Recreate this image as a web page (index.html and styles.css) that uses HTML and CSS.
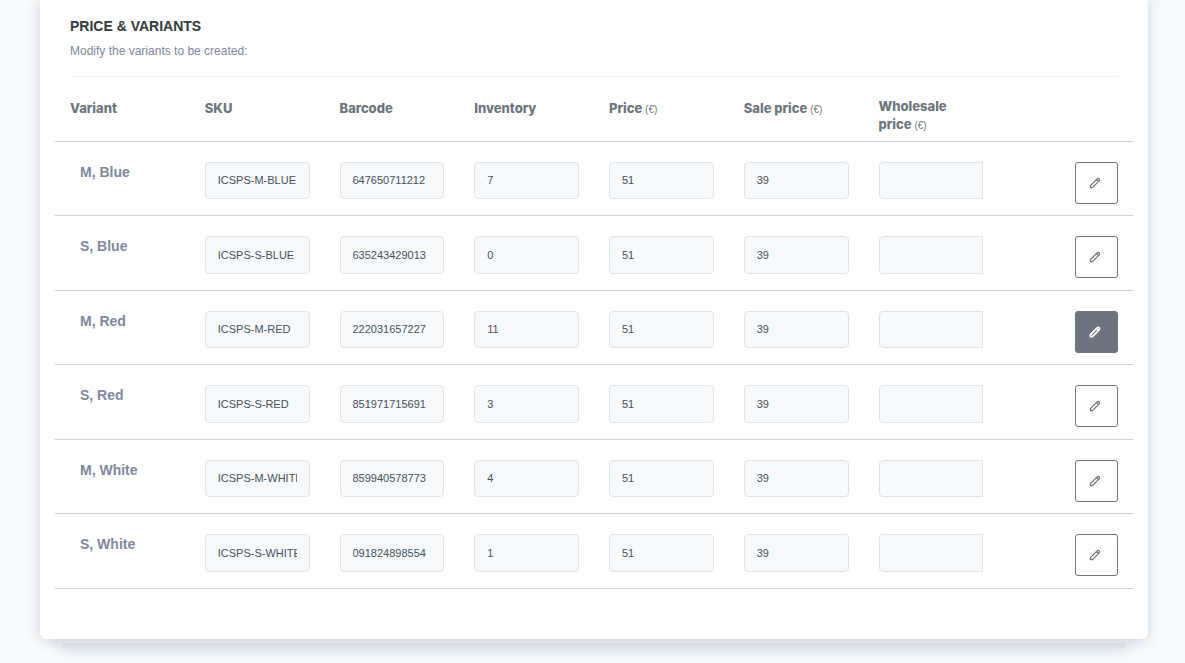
FILE: index.html
```
<!DOCTYPE html>
<html lang="en">
<head>
<meta charset="utf-8">
<title>Price &amp; Variants</title>
<link rel="stylesheet" href="styles.css">
</head>
<body>
<svg class="sprite" aria-hidden="true">
  <symbol id="pencil" viewBox="0 0 12 12">
    <path d="M1.4 10.6V8.6L7.9 2.1Q9 1 10.3 1.7Q11 3 9.9 4.1L3.4 10.6Z M7.5 2.6 9.4 4.5"/>
  </symbol>
</svg>
<main class="card">
  <header class="card-header">
    <h1 class="card-title">PRICE &amp; VARIANTS</h1>
    <p class="card-subtitle">Modify the variants to be created:</p>
  </header>
  <table class="variants">
    <thead>
      <tr>
        <th scope="col">Variant</th>
        <th scope="col">SKU</th>
        <th scope="col">Barcode</th>
        <th scope="col">Inventory</th>
        <th scope="col">Price <small>(€)</small></th>
        <th scope="col">Sale price <small>(€)</small></th>
        <th scope="col" class="two-line">Wholesale price <small>(€)</small></th>
        <td></td>
      </tr>
    </thead>
    <tbody>
      <tr>
        <th scope="row">M, Blue</th>
        <td><input class="field" aria-label="SKU" value="ICSPS-M-BLUE"></td>
        <td><input class="field" aria-label="Barcode" value="647650711212"></td>
        <td><input class="field" aria-label="Inventory" value="7"></td>
        <td><input class="field" aria-label="Price" value="51"></td>
        <td><input class="field" aria-label="Sale price" value="39"></td>
        <td><input class="field field-flat" aria-label="Wholesale price"></td>
        <td><button class="edit" type="button" aria-label="Edit M, Blue"><svg class="icon"><use href="#pencil"/></svg></button></td>
      </tr>
      <tr>
        <th scope="row">S, Blue</th>
        <td><input class="field" aria-label="SKU" value="ICSPS-S-BLUE"></td>
        <td><input class="field" aria-label="Barcode" value="635243429013"></td>
        <td><input class="field" aria-label="Inventory" value="0"></td>
        <td><input class="field" aria-label="Price" value="51"></td>
        <td><input class="field" aria-label="Sale price" value="39"></td>
        <td><input class="field field-flat" aria-label="Wholesale price"></td>
        <td><button class="edit" type="button" aria-label="Edit S, Blue"><svg class="icon"><use href="#pencil"/></svg></button></td>
      </tr>
      <tr>
        <th scope="row">M, Red</th>
        <td><input class="field" aria-label="SKU" value="ICSPS-M-RED"></td>
        <td><input class="field" aria-label="Barcode" value="222031657227"></td>
        <td><input class="field" aria-label="Inventory" value="11"></td>
        <td><input class="field" aria-label="Price" value="51"></td>
        <td><input class="field" aria-label="Sale price" value="39"></td>
        <td><input class="field field-flat" aria-label="Wholesale price"></td>
        <td><button class="edit edit-active" type="button" aria-label="Edit M, Red"><svg class="icon"><use href="#pencil"/></svg></button></td>
      </tr>
      <tr>
        <th scope="row">S, Red</th>
        <td><input class="field" aria-label="SKU" value="ICSPS-S-RED"></td>
        <td><input class="field" aria-label="Barcode" value="851971715691"></td>
        <td><input class="field" aria-label="Inventory" value="3"></td>
        <td><input class="field" aria-label="Price" value="51"></td>
        <td><input class="field" aria-label="Sale price" value="39"></td>
        <td><input class="field field-flat" aria-label="Wholesale price"></td>
        <td><button class="edit" type="button" aria-label="Edit S, Red"><svg class="icon"><use href="#pencil"/></svg></button></td>
      </tr>
      <tr>
        <th scope="row">M, White</th>
        <td><input class="field" aria-label="SKU" value="ICSPS-M-WHITE"></td>
        <td><input class="field" aria-label="Barcode" value="859940578773"></td>
        <td><input class="field" aria-label="Inventory" value="4"></td>
        <td><input class="field" aria-label="Price" value="51"></td>
        <td><input class="field" aria-label="Sale price" value="39"></td>
        <td><input class="field field-flat" aria-label="Wholesale price"></td>
        <td><button class="edit" type="button" aria-label="Edit M, White"><svg class="icon"><use href="#pencil"/></svg></button></td>
      </tr>
      <tr>
        <th scope="row">S, White</th>
        <td><input class="field" aria-label="SKU" value="ICSPS-S-WHITE"></td>
        <td><input class="field" aria-label="Barcode" value="091824898554"></td>
        <td><input class="field" aria-label="Inventory" value="1"></td>
        <td><input class="field" aria-label="Price" value="51"></td>
        <td><input class="field" aria-label="Sale price" value="39"></td>
        <td><input class="field field-flat" aria-label="Wholesale price"></td>
        <td><button class="edit" type="button" aria-label="Edit S, White"><svg class="icon"><use href="#pencil"/></svg></button></td>
      </tr>
    </tbody>
  </table>
</main>
<div class="stack stack-near"></div>
<div class="stack stack-far"></div>
</body>
</html>
```
FILE: styles.css
```
* { box-sizing: border-box; }

body {
  margin: 0;
  padding: 0 37px 14px 40px;
  background: #f5fafd;
  font-family: "Liberation Sans", Arial, sans-serif;
  color: #6c757d;
}

.sprite { display: none; }

.card {
  position: relative;
  z-index: 2;
  padding: 16px 15px 50px;
  background: #fff;
  border-radius: 0 0 6px 6px;
  box-shadow: 0 1px 14px rgba(80, 95, 125, 0.22);
}

.card-header {
  margin: 0 15px;
  padding-bottom: 16px;
  border-bottom: 1px solid #eff1f4;
}

.card-title {
  margin: 0;
  font-size: 14px;
  line-height: 20px;
  color: #343a40;
}

.card-subtitle {
  margin: 6px 0 0;
  font-size: 12px;
  line-height: 18px;
  color: #8088a0;
}

.variants {
  width: 100%;
  table-layout: fixed;
  border-collapse: separate;
  border-spacing: 0;
}

.variants th,
.variants td {
  border-bottom: 1px solid #ced1d6;
  text-align: left;
  vertical-align: top;
}

.variants thead th {
  padding: 20px 15px 8px;
  font-family: "Arial Black", Inter, "Liberation Sans", sans-serif;
  font-size: 13px;
  font-weight: 800;
  line-height: 22px;
}

.variants thead .two-line {
  padding-right: 30px;
  line-height: 18px;
}

.variants small {
  font-family: "Liberation Sans", Arial, sans-serif;
  font-size: 10px;
  font-weight: 400;
  line-height: 1;
}

.variants tbody tr { height: 74px; }
.variants tbody tr:nth-child(even) { height: 75px; }

.variants tbody th,
.variants tbody td {
  padding: 20px 15px 0;
}

.variants tbody th {
  padding-left: 25px;
  font-size: 14px;
  line-height: 20px;
  color: #8088a0;
}

.field {
  display: block;
  width: 100%;
  height: 37px;
  padding: 0 12px 1px;
  border: 1px solid #e2e5e8;
  border-radius: 4px;
  background: #f6fafd;
  color: #495057;
  font: 11px "Liberation Sans", Arial, sans-serif;
}

.variants tr:nth-child(even) .field {
  height: 38px;
  padding-bottom: 0;
}

.field-flat { border-radius: 4px 0 0 4px; }

.edit {
  display: flex;
  align-items: center;
  width: 43px;
  height: 42px;
  margin-left: auto;
  padding: 0 12px 1px 13px;
  border: 1px solid #6c757d;
  border-radius: 3px;
  background: #fff;
  color: #6c757d;
}

.edit-active {
  background: #6c757d;
  color: #fff;
}

.icon {
  width: 12px;
  height: 12px;
  fill: none;
  stroke: currentColor;
  stroke-width: 1.3;
  stroke-linejoin: round;
}

.edit-active .icon { stroke-width: 1.7; }

.stack {
  position: relative;
  margin: 0 12px;
  height: 4px;
  background: #edf0f5;
  box-shadow: 0 1px 10px rgba(80, 95, 125, 0.16);
  z-index: 1;
}

.stack-far {
  margin: 0 23px;
  height: 5px;
  background: #e8ebf2;
  box-shadow: 0 1px 14px rgba(80, 95, 125, 0.26);
  z-index: 0;
}
```
